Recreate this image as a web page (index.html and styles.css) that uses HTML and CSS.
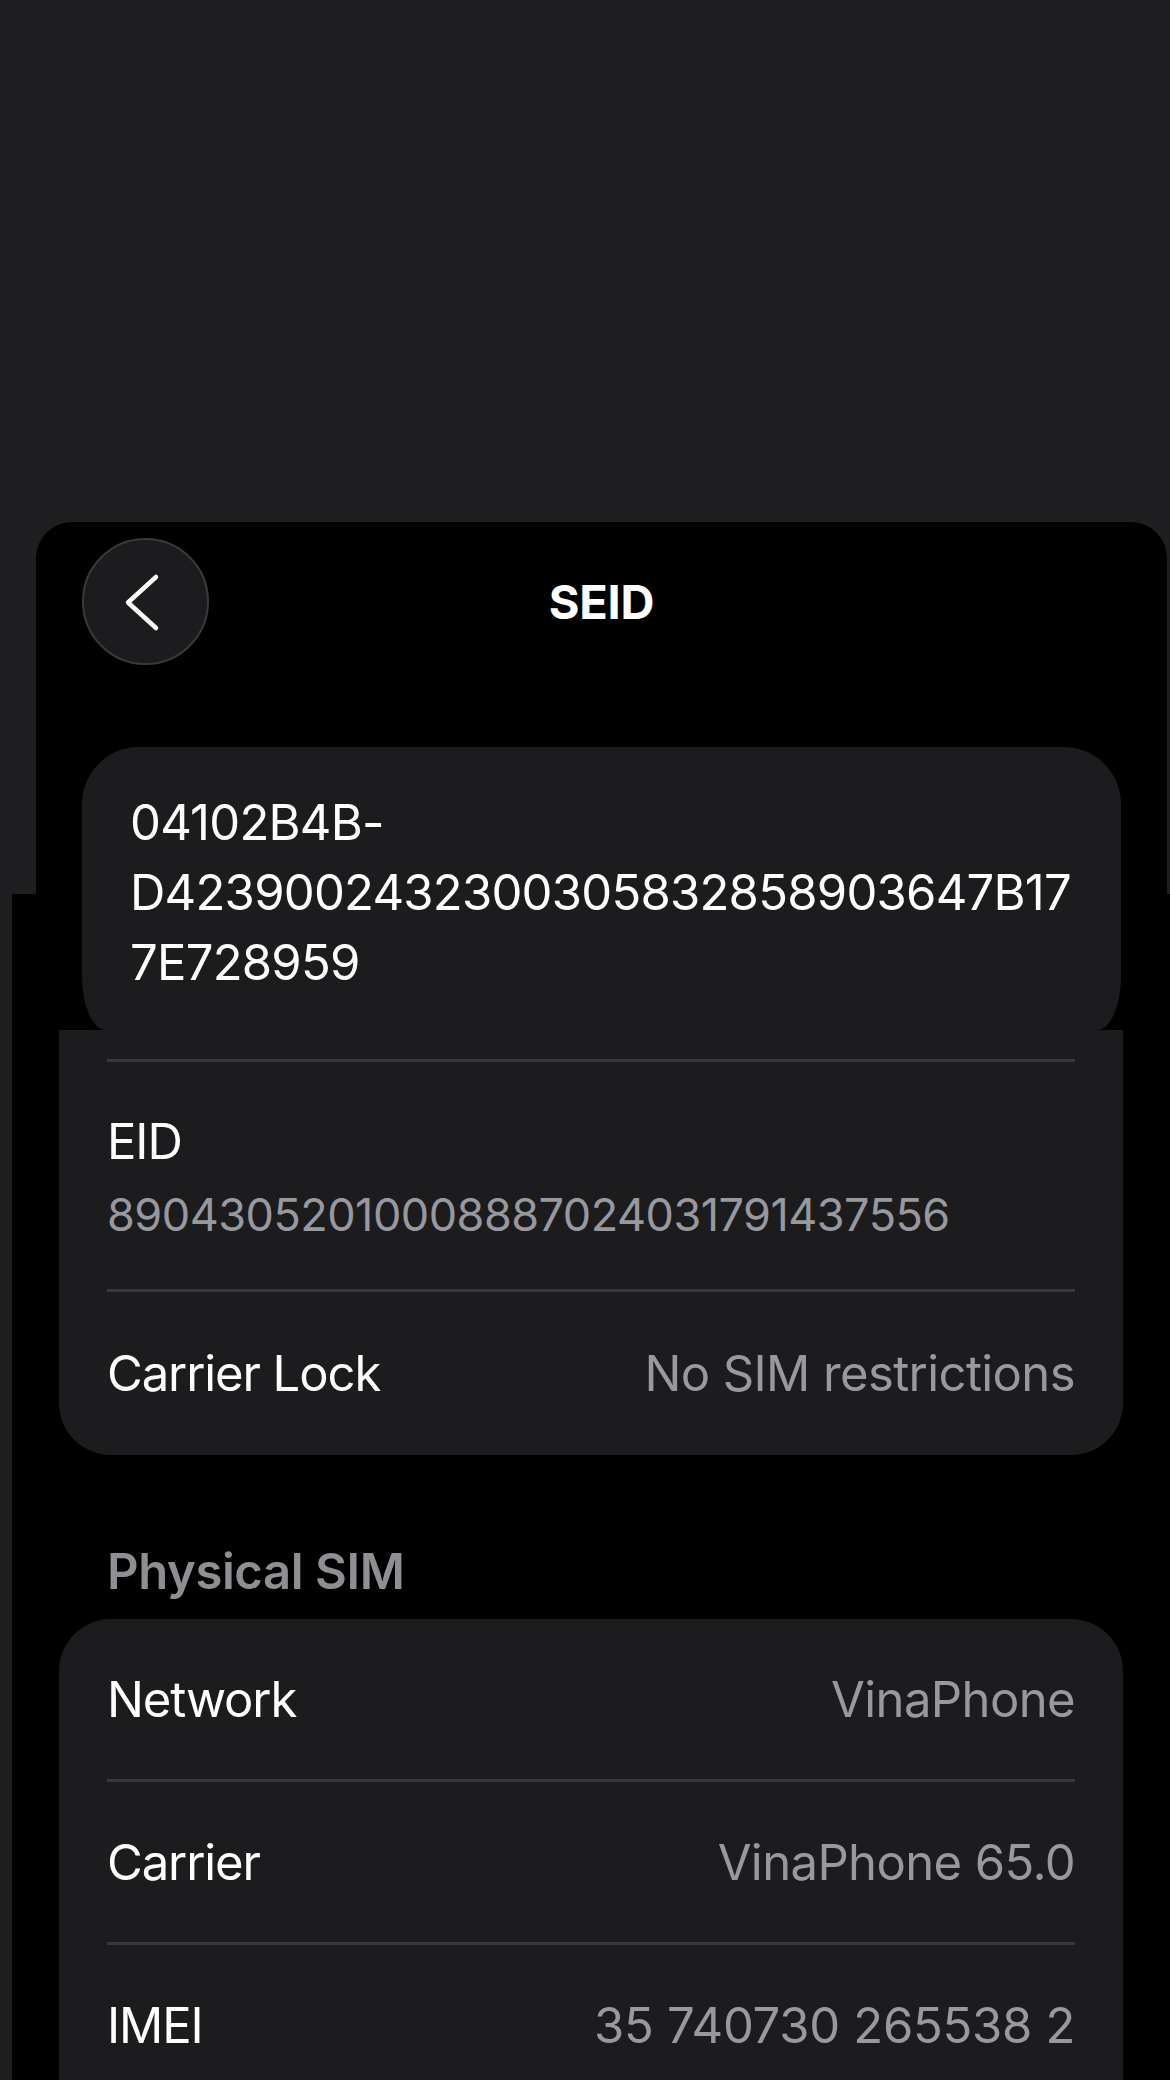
FILE: index.html
```html
<!DOCTYPE html>
<html lang="en">
<head>
<meta charset="utf-8">
<title>SEID</title>
<link rel="stylesheet" href="styles.css">
</head>
<body>
  <section class="backdrop">
    <div class="sheet">
      <header class="sheet-header">
        <button class="back-btn" aria-label="Back">
          <svg width="127" height="127" viewBox="0 0 127 127" aria-hidden="true">
            <polyline points="74,39 46,64.5 74,90" fill="none" stroke="#ffffff" stroke-width="4.5" stroke-linecap="round" stroke-linejoin="round"/>
          </svg>
        </button>
        <h1 class="sheet-title">SEID</h1>
        <span class="header-spacer"></span>
      </header>
      <div class="seid-card">
        <p class="seid-value">04102B4B-<br>D4239002432300305832858903647B17<br>7E728959</p>
      </div>
    </div>
  </section>

  <main class="settings">
    <div class="group">
      <div class="hidden-row"></div>
      <div class="sep"></div>
      <div class="row row-stack">
        <span class="label">EID</span>
        <span class="value value-sub">89043052010008887024031791437556</span>
      </div>
      <div class="sep"></div>
      <div class="row">
        <span class="label">Carrier Lock</span>
        <span class="value">No SIM restrictions</span>
      </div>
    </div>

    <h2 class="section-title">Physical SIM</h2>
    <div class="group group-open">
      <div class="row">
        <span class="label">Network</span>
        <span class="value">VinaPhone</span>
      </div>
      <div class="sep"></div>
      <div class="row">
        <span class="label">Carrier</span>
        <span class="value">VinaPhone 65.0</span>
      </div>
      <div class="sep"></div>
      <div class="row">
        <span class="label">IMEI</span>
        <span class="value value-num">35 740730 265538 2</span>
      </div>
    </div>
  </main>
</body>
</html>
```

FILE: styles.css
```css
* { box-sizing: border-box; }

html, body {
  margin: 0;
  padding: 0;
  overflow: hidden;
}

body {
  width: 1170px;
  height: 2080px;
  background: #1f1f21;
  font-family: "Inter", "Noto Sans", sans-serif;
  color: #ffffff;
  -webkit-font-smoothing: antialiased;
}

/* ---------- upper layer: sheet modal ---------- */
.backdrop {
  height: 894px;
  padding-top: 522px;
  padding-left: 36px;
  background: #1f1f21;
}

.sheet {
  position: relative;
  z-index: 1;
  width: 1131px;
  height: 508px;
  background: #000000;
  border-radius: 36px 36px 0 0;
  padding: 16px 46px 0;
}

.sheet-header {
  display: grid;
  grid-template-columns: 1fr auto 1fr;
  align-items: center;
  height: 127px;
}

.back-btn {
  width: 127px;
  height: 127px;
  padding: 0;
  border-radius: 50%;
  background: #1c1c1e;
  border: 2px solid #3a3a3c;
  display: flex;
  align-items: center;
  justify-content: center;
}
.back-btn svg { display: block; margin: -2px; }

.sheet-title {
  margin: 0;
  font-size: 47px;
  font-weight: 700;
  line-height: 60px;
  letter-spacing: -0.2px;
}

.seid-card {
  margin-top: 82px;
  width: 1039px;
  height: 283px;
  background: #1c1c1e;
  border-radius: 57px 57px 24px 24px / 57px 57px 53px 53px;
  padding: 41px 48px 0;
}

.seid-value {
  margin: 0;
  font-size: 49px;
  line-height: 70px;
  white-space: nowrap;
  letter-spacing: -0.76px;
}

/* ---------- lower layer: settings list ---------- */
.settings {
  margin-left: 12px;
  height: 1186px;
  overflow: hidden;
  background: #000000;
  padding: 0 47px;
}

.group {
  background: #1c1c1e;
  border-radius: 52px;
  padding: 0 48px;
}

.group-open {
  padding-bottom: 80px;
}

.hidden-row { height: 165px; }

.sep {
  height: 3px;
  background: #38383b;
}

.row {
  height: 160px;
  display: flex;
  align-items: center;
  justify-content: space-between;
  font-size: 49px;
}

.row-stack {
  height: 227px;
  flex-direction: column;
  align-items: flex-start;
  justify-content: flex-start;
  padding-top: 45px;
  line-height: 70px;
}

.group > .row:last-child { height: 163px; }
.group-open > .row:last-child { height: 160px; }

.label {
  color: #ffffff;
  letter-spacing: -1.1px;
}

.value {
  color: #98989f;
  letter-spacing: -0.6px;
}

.value-num {
  letter-spacing: -0.3px;
}

.value-sub {
  font-size: 45px;
  letter-spacing: -0.5px;
  margin-top: 3px;
}

.section-title {
  margin: 82px 0 12px 48px;
  font-size: 49px;
  line-height: 70px;
  font-weight: 600;
  color: #8e8e93;
  letter-spacing: -0.4px;
}
```
